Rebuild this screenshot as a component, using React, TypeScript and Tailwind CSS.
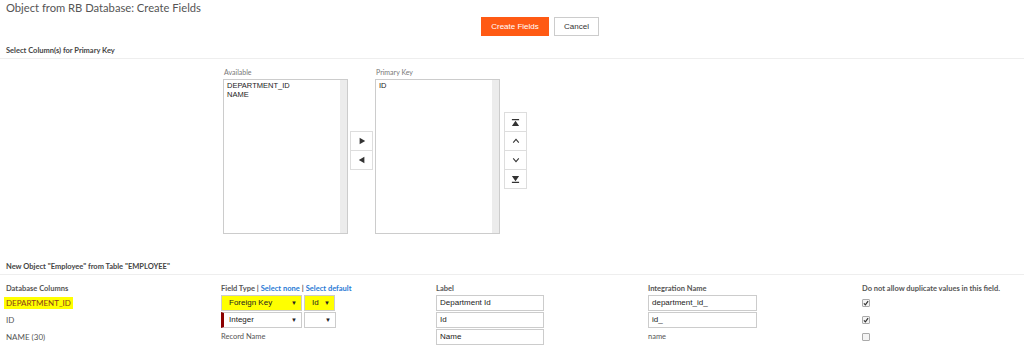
import type { ReactNode } from 'react'

const lato = { fontFamily: 'Lato, "Open Sans", sans-serif' }
const arial = { fontFamily: '"Liberation Sans", Arial, sans-serif' }

function ListBox({ label, items }: { label: string; items: string[] }) {
  return (
    <div className="flex flex-col">
      <span className="mb-[3px] h-[8px] pl-[1px] text-[7px] leading-[8px] text-[#777]" style={lato}>
        {label}
      </span>
      <div className="flex h-[155px] w-[125px] border border-[#ccc] bg-white">
        <div className="flex-1 px-[3px] pt-[1px] text-[7.5px] leading-[9px] text-[#222]" style={arial}>
          {items.map((it) => (
            <div key={it}>{it}</div>
          ))}
        </div>
        <div className="w-[7px] bg-[#ececec]" />
      </div>
    </div>
  )
}

function SmallBtn({ children }: { children: ReactNode }) {
  return (
    <div className="-mt-[1px] flex h-[20px] w-[23px] items-center justify-center border border-[#ddd] bg-white text-[#333] first:mt-0">
      {children}
    </div>
  )
}

function Select({ value, w, red, hl }: { value: string; w: string; red?: boolean; hl?: boolean }) {
  return (
    <div
      className={`flex h-[16px] items-center justify-between border border-[#ccc] pr-[4px] ${w} ${
        red ? 'border-l-[3px] border-l-[#8b0000] pl-[5px]' : 'pl-[7px]'
      }`}
    >
      <span
        className={`text-[8px] leading-[10px] text-[#222] ${hl ? 'bg-[#ffff00]' : ''}`}
        style={arial}
      >
        {value}
      </span>
      <span className="text-[6px] text-[#222]">▼</span>
    </div>
  )
}

function TextBox({ value, w }: { value: string; w: string }) {
  return (
    <div
      className={`flex h-[16px] items-center border border-[#ccc] bg-white px-[3px] text-[8px] text-[#222] ${w}`}
      style={arial}
    >
      {value}
    </div>
  )
}

function Check({ on }: { on: boolean }) {
  return (
    <div className="flex h-[8px] w-[8px] items-center justify-center rounded-[1px] border border-[#aaa] bg-[#f4f4f4]">
      {on && (
        <svg viewBox="0 0 10 10" className="h-[6px] w-[6px]">
          <path d="M1.5 5.5 L4 8 L8.5 2" stroke="#333" strokeWidth="2" fill="none" />
        </svg>
      )}
    </div>
  )
}

export default function App() {
  return (
    <div className="h-[350px] w-[1024px] overflow-hidden bg-white" style={lato}>
      <div className="pl-[6px] pt-0 text-[11.2px] leading-[16px] text-[#555]">
        Object from RB Database: Create Fields
      </div>
      <div className="mt-[1px] flex gap-[5px] pl-[481px]">
        <button className="h-[19px] w-[68px] bg-[#ff5a14] text-[8px] text-white" style={arial}>
          Create Fields
        </button>
        <button
          className="h-[19px] w-[45px] border border-[#ccc] bg-white text-[8px] text-[#333]"
          style={arial}
        >
          Cancel
        </button>
      </div>

      <div className="mt-[10px] border-b border-[#eee] pb-[3px] pl-[6px] text-[7.5px] font-bold leading-[9px] text-[#444]">
        Select Column(s) for Primary Key
      </div>

      <div className="mt-[9px] flex pl-[223px]">
        <ListBox label="Available" items={['DEPARTMENT_ID', 'NAME']} />
        <div className="ml-[2px] mt-[63px] flex flex-col">
          <SmallBtn>
            <svg viewBox="0 0 10 10" className="h-[8px] w-[8px]">
              <path d="M2 1 L9 5 L2 9 Z" fill="#333" />
            </svg>
          </SmallBtn>
          <SmallBtn>
            <svg viewBox="0 0 10 10" className="h-[8px] w-[8px]">
              <path d="M8 1 L1 5 L8 9 Z" fill="#333" />
            </svg>
          </SmallBtn>
        </div>
        <div className="ml-[2px]">
          <ListBox label="Primary Key" items={['ID']} />
        </div>
        <div className="ml-[4px] mt-[44px] flex flex-col">
          <SmallBtn>
            <svg viewBox="0 0 10 10" className="h-[9px] w-[9px]">
              <path d="M1 1 H9 V2.4 H1 Z M5 3 L9 9 H1 Z" fill="#333" />
            </svg>
          </SmallBtn>
          <SmallBtn>
            <svg viewBox="0 0 10 10" className="h-[8px] w-[8px]">
              <path d="M1.5 7 L5 3 L8.5 7" stroke="#333" strokeWidth="1.3" fill="none" />
            </svg>
          </SmallBtn>
          <SmallBtn>
            <svg viewBox="0 0 10 10" className="h-[8px] w-[8px]">
              <path d="M1.5 3 L5 7 L8.5 3" stroke="#333" strokeWidth="1.3" fill="none" />
            </svg>
          </SmallBtn>
          <SmallBtn>
            <svg viewBox="0 0 10 10" className="h-[9px] w-[9px]">
              <path d="M1 1 H9 L5 7 Z M1 7.6 H9 V9 H1 Z" fill="#333" />
            </svg>
          </SmallBtn>
        </div>
      </div>

      <div className="mt-[28px] border-b border-[#eee] pb-[3px] pl-[6px] text-[7.5px] font-bold leading-[9px] text-[#444]">
        New Object "Employee" from Table "EMPLOYEE"
      </div>

      <div className="mt-[8px] grid grid-cols-[215px_215px_212px_214px_1fr] pl-[6px] text-[7.5px] text-[#555]">
        <div className="flex h-[11px] items-center font-bold">Database Columns</div>
        <div className="flex h-[11px] items-center font-bold">
          Field Type |<span className="ml-[2px] mr-[2px] text-[#2a7ad5]">Select none</span>|
          <span className="ml-[2px] text-[#2a7ad5]">Select default</span>
        </div>
        <div className="flex h-[11px] items-center font-bold">Label</div>
        <div className="flex h-[11px] items-center font-bold">Integration Name</div>
        <div className="flex h-[11px] items-center font-bold">Do not allow duplicate values in this field.</div>

        <div className="flex h-[17px] items-center text-[8px]">
          <span className="-ml-[2px] bg-[#ffff00] px-[2px] text-[#8a3a1a]">DEPARTMENT_ID</span>
        </div>
        <div className="flex h-[17px] items-center gap-[2px]">
          <div className="bg-[#ffff00]">
            <Select value="Foreign Key" w="w-[81px]" hl />
          </div>
          <div className="bg-[#ffff00]">
            <Select value="Id" w="w-[31px]" hl />
          </div>
        </div>
        <div className="flex h-[17px] items-center">
          <TextBox value="Department Id" w="w-[108px]" />
        </div>
        <div className="flex h-[17px] items-center">
          <TextBox value="department_id_" w="w-[109px]" />
        </div>
        <div className="flex h-[17px] items-center">
          <Check on />
        </div>

        <div className="flex h-[17px] items-center text-[8px]">ID</div>
        <div className="flex h-[17px] items-center gap-[2px]">
          <Select value="Integer" w="w-[81px]" red />
          <Select value="" w="w-[32px]" />
        </div>
        <div className="flex h-[17px] items-center">
          <TextBox value="Id" w="w-[108px]" />
        </div>
        <div className="flex h-[17px] items-center">
          <TextBox value="id_" w="w-[109px]" />
        </div>
        <div className="flex h-[17px] items-center">
          <Check on />
        </div>

        <div className="flex h-[17px] items-center text-[8px]">NAME (30)</div>
        <div className="flex h-[17px] items-center">Record Name</div>
        <div className="flex h-[17px] items-center">
          <TextBox value="Name" w="w-[108px]" />
        </div>
        <div className="flex h-[17px] items-center">name</div>
        <div className="flex h-[17px] items-center">
          <Check on={false} />
        </div>
      </div>
    </div>
  )
}
